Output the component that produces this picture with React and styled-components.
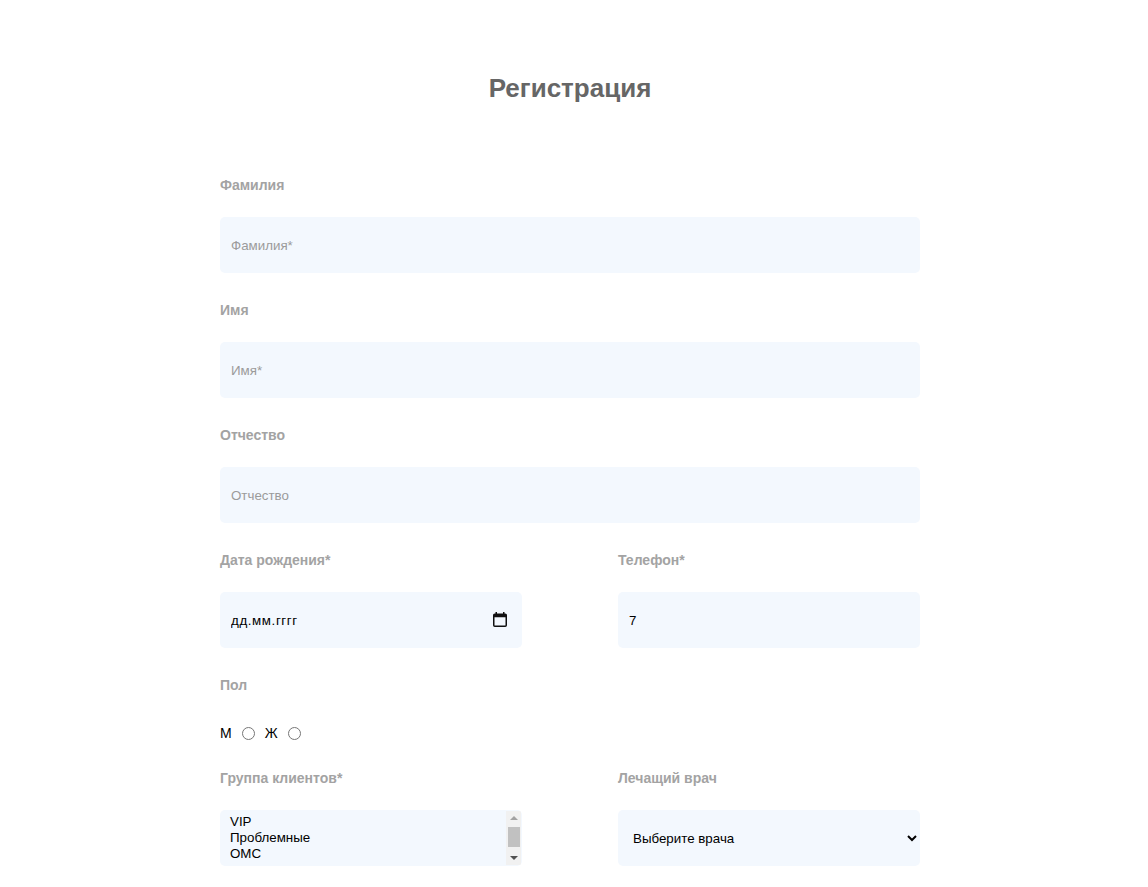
import React from 'react'
import styled, { createGlobalStyle } from 'styled-components'

const GlobalStyle = createGlobalStyle`
  body {
    margin: 0;
    background: #ffffff;
    font-family: "Liberation Sans", Arial, sans-serif;
  }
`

const Page = styled.div`
  padding: 73px 8px 40px 0;
`

const Title = styled.h1`
  margin: 0 0 74px;
  text-align: center;
  font-size: 26px;
  line-height: 30px;
  font-weight: 700;
  color: #666666;
`

const Form = styled.form`
  width: 700px;
  margin: 0 auto;
  display: flex;
  flex-direction: column;
  gap: 29px;
`

const Row = styled.div`
  display: grid;
  grid-template-columns: 302px 302px;
  justify-content: space-between;
`

const Field = styled.div`
  display: flex;
  flex-direction: column;
`

const Label = styled.label`
  display: block;
  font-size: 14px;
  line-height: 16px;
  font-weight: 700;
  color: #a3a3a3;
  margin-bottom: 24px;
`

const Input = styled.input`
  box-sizing: border-box;
  height: 56px;
  width: 100%;
  border: none;
  border-radius: 5px;
  background: #f3f8fe;
  padding: 0 10px 0 11px;
  font-family: "Liberation Sans", Arial, sans-serif;
  font-size: 13.33px;
  color: #000;
  outline: none;

  &::placeholder {
    color: ${p => (p.$dark ? '#000' : '#9b9b9b')};
    letter-spacing: ${p => (p.$dark ? '0.6px' : '0')};
  }
`

const DateBox = styled.div`
  position: relative;
`

const CalendarIcon = styled.svg`
  position: absolute;
  right: 15px;
  top: 20px;
  width: 14px;
  height: 15px;
  pointer-events: none;
`

const Select = styled.select`
  box-sizing: border-box;
  height: 56px;
  width: 100%;
  border: none;
  border-radius: 5px;
  background: #f3f8fe;
  padding: 0 10px 0 11px;
  font-family: "Liberation Sans", Arial, sans-serif;
  font-size: 13.33px;
  color: #000;
  outline: none;
`

const ListBox = styled.div`
  box-sizing: border-box;
  height: 56px;
  display: flex;
  border-radius: 5px;
  background: #f3f8fe;
  overflow: hidden;
`

const Options = styled.ul`
  flex: 1;
  margin: 0;
  padding: 4px 0 0 10px;
  list-style: none;
  font-size: 13.33px;
  line-height: 16px;
  color: #000;
  overflow: hidden;
`

const Scrollbar = styled.div`
  width: 15px;
  margin: 1px 1px 1px 0;
  background: #f1f1f1;
  display: flex;
  flex-direction: column;
`

const ScrollArrow = styled.span`
  height: 14px;
  display: flex;
  align-items: center;
  justify-content: center;

  &::before {
    content: '';
    border-left: 4px solid transparent;
    border-right: 4px solid transparent;
    ${p =>
      p.$up
        ? 'border-bottom: 4px solid #a3a3a3;'
        : 'border-top: 4px solid #505050;'}
  }
`

const Track = styled.span`
  flex: 1;
  display: flex;
  justify-content: center;
  align-items: flex-start;
`

const Thumb = styled.span`
  display: block;
  width: 12px;
  height: 20px;
  margin-top: 2px;
  background: #c1c1c1;
`

const RadioRow = styled.div`
  display: flex;
  align-items: center;
  padding-top: 8px;
  margin-top: -29px;
  font-size: 14px;
  line-height: 16px;
  color: #000;

  input {
    margin: 0 10px 0 10px;
    width: 13px;
    height: 13px;
  }
`

export default function App() {
  return (
    <>
      <GlobalStyle />
      <Page>
        <Title>Регистрация</Title>
        <Form onSubmit={e => e.preventDefault()}>
          <Field>
            <Label>Фамилия</Label>
            <Input placeholder="Фамилия*" />
          </Field>
          <Field>
            <Label>Имя</Label>
            <Input placeholder="Имя*" />
          </Field>
          <Field>
            <Label>Отчество</Label>
            <Input placeholder="Отчество" />
          </Field>
          <Row>
            <Field>
              <Label>Дата рождения*</Label>
              <DateBox>
                <Input $dark placeholder="дд.мм.гггг" />
                <CalendarIcon viewBox="0 0 14 15">
                  <rect x="0.75" y="2.25" width="12.5" height="12" rx="1" fill="none" stroke="#111" strokeWidth="1.5" />
                  <rect x="0.75" y="2.25" width="12.5" height="3" fill="#111" />
                  <rect x="2.5" y="0" width="1.5" height="3" fill="#111" />
                  <rect x="10" y="0" width="1.5" height="3" fill="#111" />
                </CalendarIcon>
              </DateBox>
            </Field>
            <Field>
              <Label>Телефон*</Label>
              <Input type="tel" defaultValue="7" />
            </Field>
          </Row>
          <Field>
            <Label>Пол</Label>
          </Field>
          <RadioRow>
            М<input type="radio" name="sex" />Ж<input type="radio" name="sex" />
          </RadioRow>
          <Row>
            <Field>
              <Label>Группа клиентов*</Label>
              <ListBox role="listbox" aria-multiselectable="true">
                <Options>
                  <li>VIP</li>
                  <li>Проблемные</li>
                  <li>ОМС</li>
                </Options>
                <Scrollbar>
                  <ScrollArrow $up />
                  <Track>
                    <Thumb />
                  </Track>
                  <ScrollArrow />
                </Scrollbar>
              </ListBox>
            </Field>
            <Field>
              <Label>Лечащий врач</Label>
              <Select defaultValue="">
                <option value="">Выберите врача</option>
                <option value="1">Иванов И.И.</option>
              </Select>
            </Field>
          </Row>
        </Form>
      </Page>
    </>
  )
}
